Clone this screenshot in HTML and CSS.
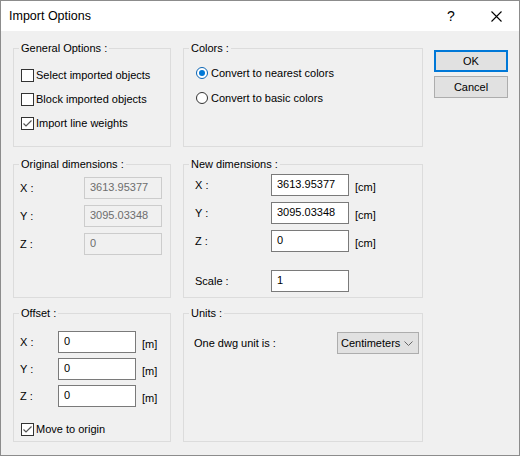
FILE: index.html
```html
<!DOCTYPE html>
<html lang="en">

<head>
    <meta charset="UTF-8">
    <meta name="viewport" content="width=device-width, initial-scale=1.0">
    <title>Import Options</title>
    <link rel="stylesheet" href="styles.css">
</head>

<body>
    <div class="window">
        <div class="titlebar">
            <span class="title">Import Options</span>
            <span class="help">?</span>
            <span class="close">
                <svg width="11" height="11" viewBox="0 0 11 11"><path d="M0.5 0.5 L10.5 10.5 M10.5 0.5 L0.5 10.5" stroke="#000" stroke-width="1.1" fill="none"/></svg>
            </span>
        </div>

        <div class="content">
            <!-- row 1 -->
            <div class="group group-general">
                <span class="group-title">General Options :</span>
                <div class="check-row"><span class="checkbox"></span>Select imported objects</div>
                <div class="check-row"><span class="checkbox"></span>Block imported objects</div>
                <div class="check-row"><span class="checkbox checked"><svg width="11" height="11" viewBox="0 0 11 11"><path d="M1.5 5.5 L4 8 L9.5 2.5" stroke="#555" stroke-width="1.2" fill="none"/></svg></span>Import line weights</div>
            </div>

            <div class="group group-colors">
                <span class="group-title">Colors :</span>
                <div class="radio-row"><span class="radio selected"></span>Convert to nearest colors</div>
                <div class="radio-row"><span class="radio"></span>Convert to basic colors</div>
            </div>

            <div class="buttons">
                <button class="btn btn-default">OK</button>
                <button class="btn">Cancel</button>
            </div>

            <!-- row 2 -->
            <div class="group group-original">
                <span class="group-title">Original dimensions :</span>
                <div class="field-grid original-grid">
                    <span class="label">X :</span><input class="field" type="text" value="3613.95377" disabled>
                    <span class="label">Y :</span><input class="field" type="text" value="3095.03348" disabled>
                    <span class="label">Z :</span><input class="field" type="text" value="0" disabled>
                </div>
            </div>

            <div class="group group-new">
                <span class="group-title">New dimensions :</span>
                <div class="field-grid new-grid">
                    <span class="label">X :</span><input class="field" type="text" value="3613.95377"><span class="unit">[cm]</span>
                    <span class="label">Y :</span><input class="field" type="text" value="3095.03348"><span class="unit">[cm]</span>
                    <span class="label">Z :</span><input class="field" type="text" value="0"><span class="unit">[cm]</span>
                    <span class="label scale-gap">Scale :</span><input class="field scale-gap" type="text" value="1"><span></span>
                </div>
            </div>

            <!-- row 3 -->
            <div class="group group-offset">
                <span class="group-title">Offset :</span>
                <div class="field-grid offset-grid">
                    <span class="label">X :</span><input class="field" type="text" value="0"><span class="unit">[m]</span>
                    <span class="label">Y :</span><input class="field" type="text" value="0"><span class="unit">[m]</span>
                    <span class="label">Z :</span><input class="field" type="text" value="0"><span class="unit">[m]</span>
                </div>
                <div class="check-row origin-row"><span class="checkbox checked"><svg width="11" height="11" viewBox="0 0 11 11"><path d="M1.5 5.5 L4 8 L9.5 2.5" stroke="#555" stroke-width="1.2" fill="none"/></svg></span>Move to origin</div>
            </div>

            <div class="group group-units">
                <span class="group-title">Units :</span>
                <div class="units-row">
                    <span>One dwg unit is :</span>
                    <div class="combo">
                        <span>Centimeters</span>
                        <svg width="9" height="5" viewBox="0 0 9 5"><path d="M0.5 0.5 L4.5 4.5 L8.5 0.5" stroke="#666" stroke-width="1" fill="none"/></svg>
                    </div>
                </div>
            </div>
        </div>
    </div>
</body>

</html>
```

FILE: styles.css
```css
body {
    margin: 0;
    font-family: "Liberation Sans", Arial, sans-serif;
    font-size: 11px;
    color: #000;
}

.window {
    width: 520px;
    height: 456px;
    box-sizing: border-box;
    border: 1px solid #8c8c8c;
    background: #f0f0f0;
}

/* title bar */
.titlebar {
    height: 30px;
    background: #fff;
    display: flex;
    align-items: center;
}

.title {
    font-size: 12.5px;
    margin-left: 8px;
    flex: 1;
}

.help {
    font-size: 14px;
    width: 14px;
    margin-right: 30px;
}

.close {
    display: flex;
    margin-right: 17px;
}

/* main layout */
.content {
    display: grid;
    grid-template-columns: 158px 240px 73px;
    column-gap: 12px;
    align-items: start;
    padding: 17px 0 0 12px;
}

.group {
    position: relative;
    border: 1px solid #dcdcdc;
    box-sizing: border-box;
}

.group-title {
    position: absolute;
    top: -7px;
    left: 5px;
    padding: 0 2px;
    line-height: 13px;
    background: #f0f0f0;
}

.group-general,
.group-colors {
    height: 99px;
}

.group-original,
.group-new {
    height: 134px;
    margin-top: 17px;
}

.group-offset,
.group-units {
    height: 129px;
    margin-top: 15px;
}

.group-original,
.group-offset {
    grid-column: 1;
}

.group-new,
.group-units {
    grid-column: 2;
}

/* checkboxes */
.group-general {
    padding: 14px 7px 0;
}

.check-row {
    height: 24px;
    display: flex;
    align-items: center;
}

.checkbox {
    width: 13px;
    height: 13px;
    box-sizing: border-box;
    border: 1px solid #333;
    background: #fff;
    margin-right: 2px;
    display: flex;
    align-items: center;
    justify-content: center;
}

/* radios */
.group-colors {
    padding: 11px 12px 0;
}

.radio-row {
    height: 25px;
    display: flex;
    align-items: center;
}

.radio {
    width: 12px;
    height: 12px;
    box-sizing: border-box;
    border: 1px solid #333;
    border-radius: 50%;
    background: #fff;
    margin-right: 3px;
    display: flex;
    align-items: center;
    justify-content: center;
}

.radio.selected {
    border-color: #0a64b4;
}

.radio.selected::after {
    content: "";
    width: 6px;
    height: 6px;
    border-radius: 50%;
    background: #0078d7;
}

/* buttons */
.buttons {
    display: flex;
    flex-direction: column;
    gap: 4px;
    padding-top: 2px;
    margin-left: -1px;
}

.btn {
    height: 22px;
    box-sizing: border-box;
    border: 1px solid #adadad;
    background: #e1e1e1;
    font-family: inherit;
    font-size: 11px;
    padding: 0;
}

.btn-default {
    border: 2px solid #0078d7;
}

/* text fields */
.field-grid {
    display: grid;
    row-gap: 6px;
    align-items: center;
}

.field {
    height: 22px;
    width: 78px;
    box-sizing: border-box;
    border: 1px solid #7a7a7a;
    background: #fff;
    font-family: inherit;
    font-size: 11px;
    padding: 0 5px 2px;
    margin: 0;
    color: #000;
}

.field:disabled {
    border-color: #cccccc;
    background: #f0f0f0;
    color: #6d6d6d;
}

.unit {
    padding: 3px 0 0 6px;
}

.original-grid {
    grid-template-columns: 64px 78px;
    padding: 12px 0 0 6px;
}

.new-grid {
    grid-template-columns: 76px 78px auto;
    padding: 9px 0 0 11px;
}

.new-grid .scale-gap {
    margin-top: 12px;
}

.offset-grid {
    grid-template-columns: 38px 78px auto;
    row-gap: 5px;
    padding: 17px 0 0 6px;
}

.origin-row {
    margin: 10px 0 0 7px;
}

/* units */
.units-row {
    display: flex;
    justify-content: space-between;
    align-items: center;
    padding: 18px 3px 0 10px;
}

.combo {
    width: 82px;
    height: 22px;
    box-sizing: border-box;
    border: 1px solid #adadad;
    background: #e1e1e1;
    display: flex;
    align-items: center;
    justify-content: space-between;
    padding: 0 5px 0 3px;
}
```
